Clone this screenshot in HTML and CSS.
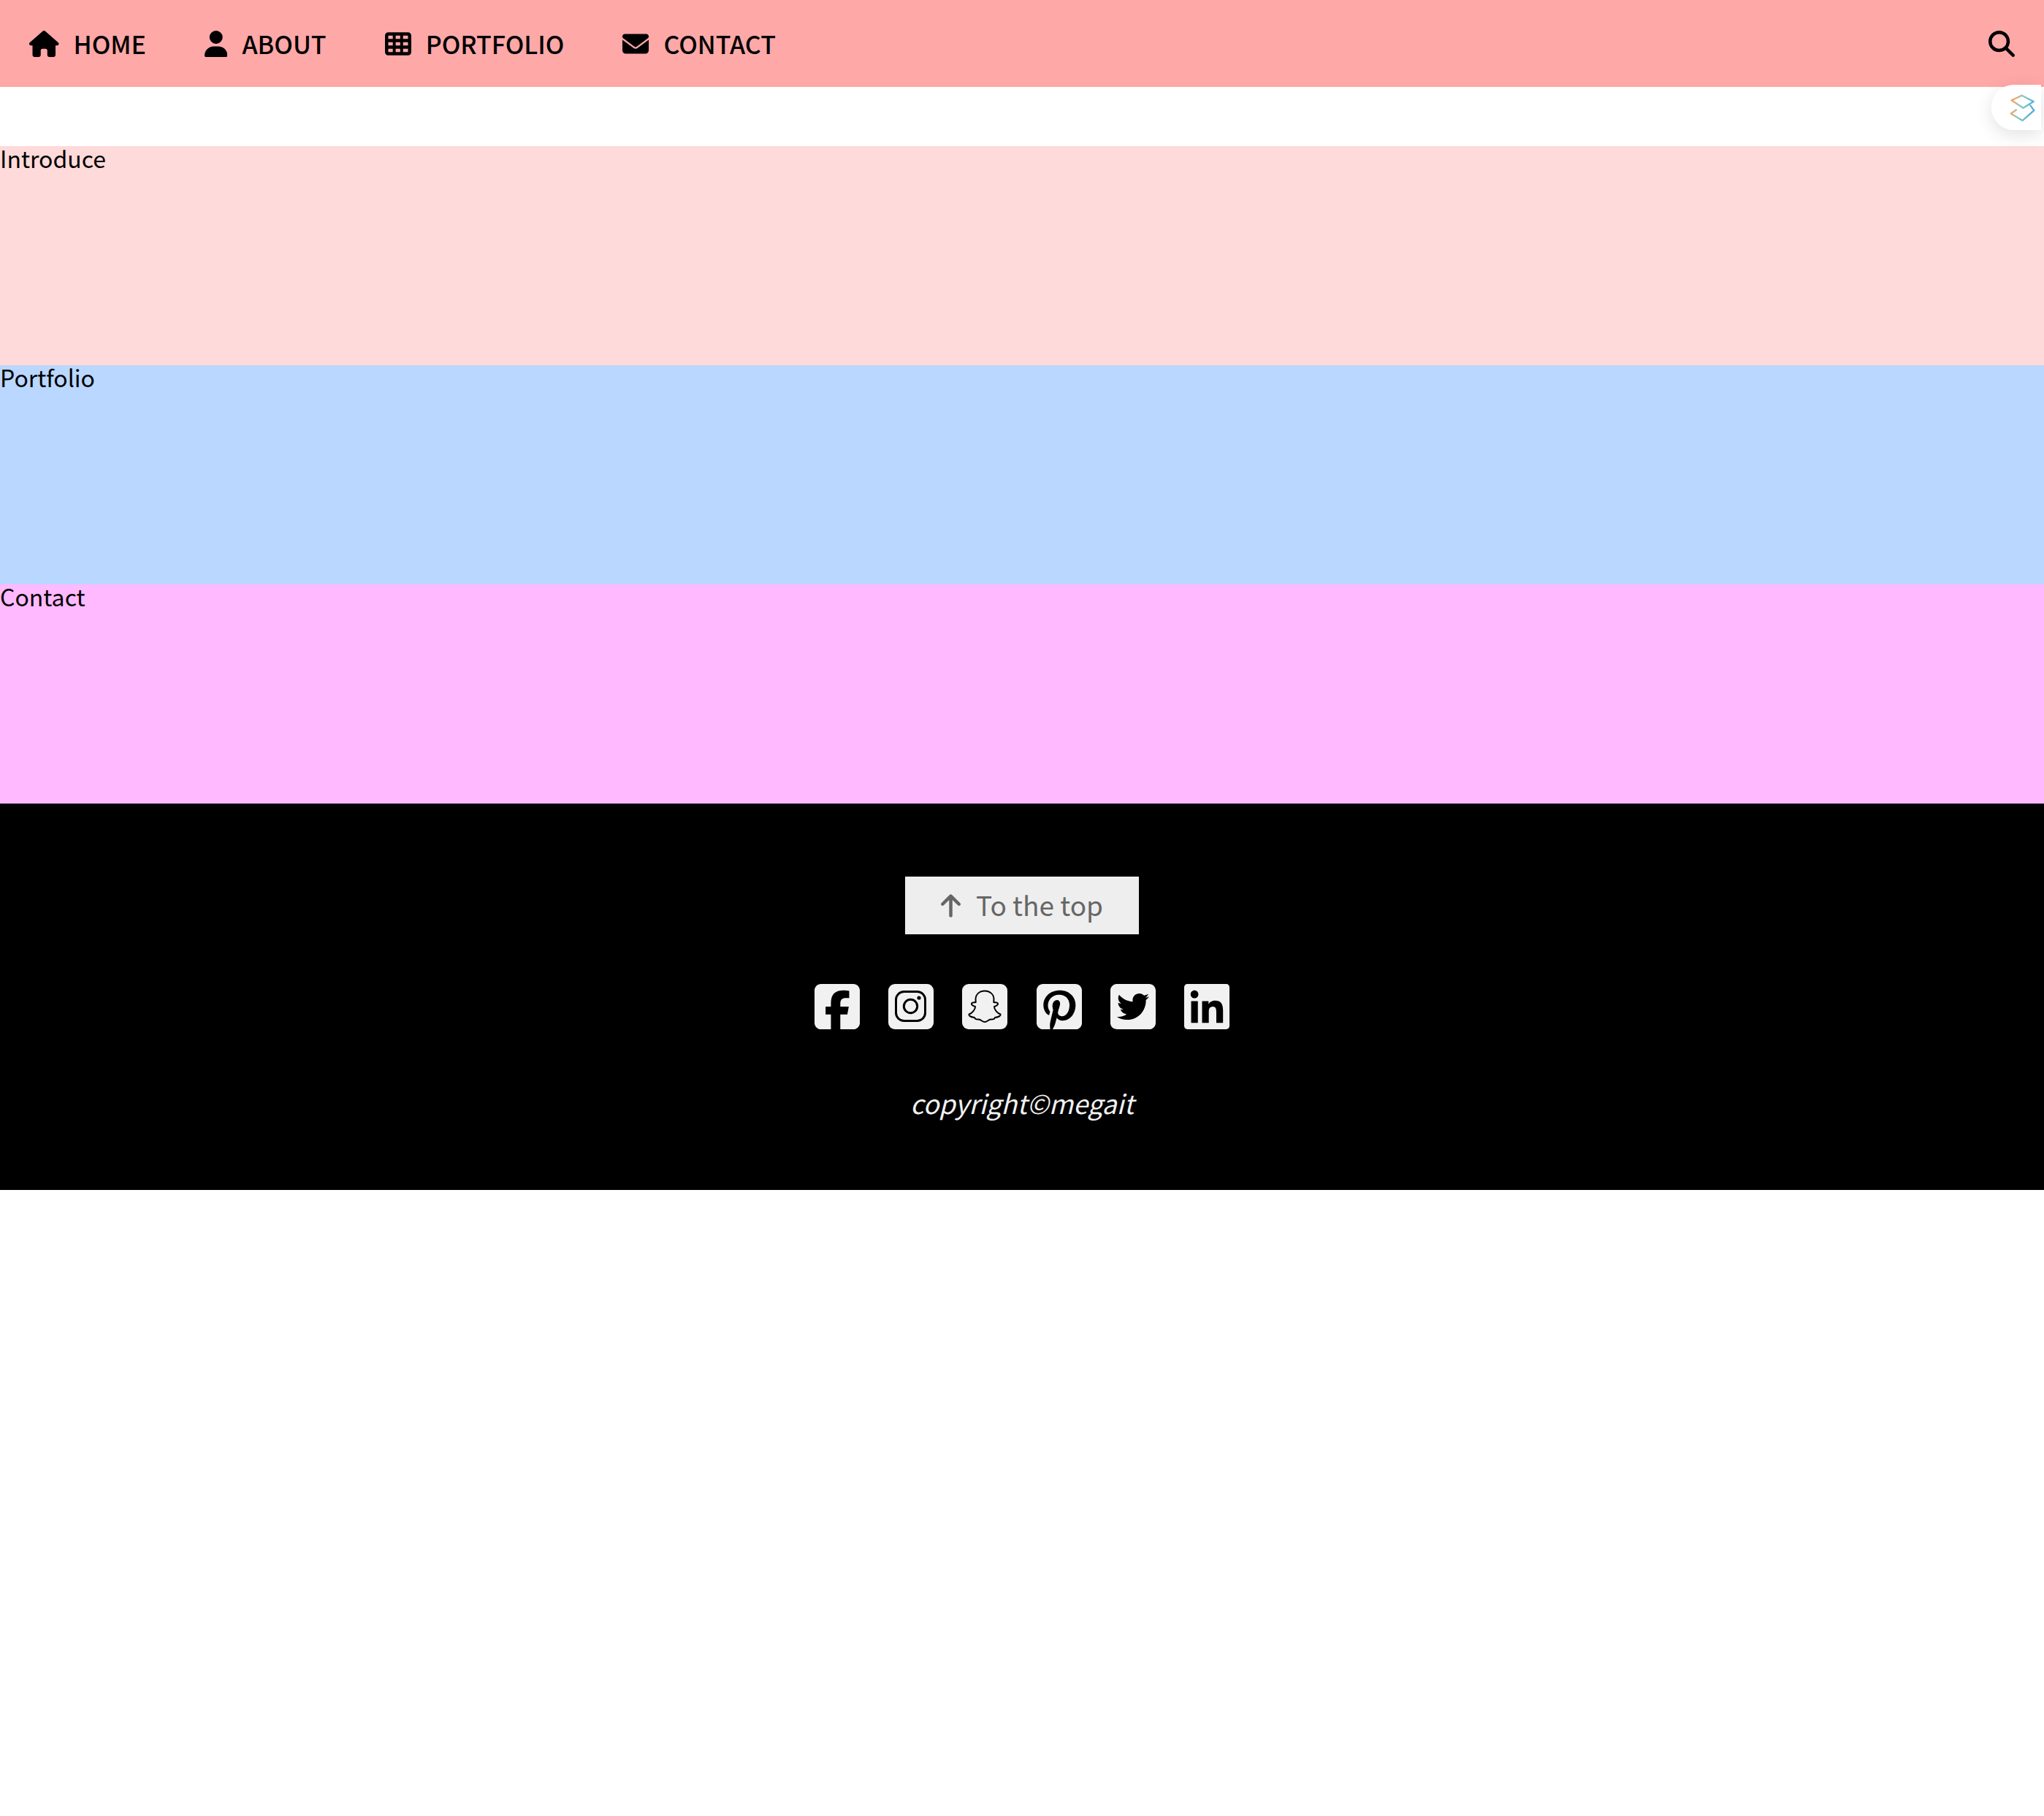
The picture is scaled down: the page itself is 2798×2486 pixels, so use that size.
FILE: index.html
```html
<!DOCTYPE html>
<html lang="en">
<head>
<meta charset="utf-8">
<title>Portfolio</title>
<link rel="stylesheet" href="styles.css">
</head>
<body>
<header class="nav">
  <nav class="nav-links">
    <a class="nav-link"><svg class="nav-icon" viewBox="0 0 576 512"><path d="M575.8 255.5c0 18-15 32.1-32 32.1h-32l.7 160.2c0 2.7-.2 5.4-.5 8.1V472c0 22.1-17.9 40-40 40H456c-1.1 0-2.2 0-3.3-.1c-1.4 .1-2.8 .1-4.2 .1H416 392c-22.1 0-40-17.9-40-40V448 384c0-17.7-14.3-32-32-32H256c-17.7 0-32 14.3-32 32v64 24c0 22.1-17.9 40-40 40H160 128.1c-1.5 0-3-.1-4.5-.2c-1.2 .1-2.4 .2-3.6 .2H104c-22.1 0-40-17.9-40-40V360c0-.9 0-1.9 .1-2.8V287.6H32c-18 0-32-14-32-32.1c0-9 3-17 10-24L266.4 8c7-7 15-8 22-8s15 2 21 7L564.8 231.5c8 7 12 15 11 24z"/></svg>HOME</a>
    <a class="nav-link"><svg class="nav-icon" viewBox="0 0 448 512"><path d="M224 256A128 128 0 1 0 224 0a128 128 0 1 0 0 256zm-45.7 48C79.8 304 0 383.8 0 482.3C0 498.7 13.3 512 29.7 512H418.3c16.4 0 29.7-13.3 29.7-29.7C448 383.8 368.2 304 269.7 304H178.3z"/></svg>ABOUT</a>
    <a class="nav-link"><svg class="nav-icon" viewBox="0 0 512 512"><path d="M64 32C28.7 32 0 60.7 0 96V416c0 35.3 28.7 64 64 64H448c35.3 0 64-28.7 64-64V96c0-35.3-28.7-64-64-64H64zm88 64v64H64V96h88zm56 0h88v64H208V96zm240 0v64H352V96h96zM64 224h88v64H64V224zm232 0v64H208V224h88zm56 0h96v64H352V224zM152 352v64H64V352h88zm56 0h88v64H208V352zm240 0v64H352V352h96z" fill-rule="evenodd"/></svg>PORTFOLIO</a>
    <a class="nav-link"><svg class="nav-icon" viewBox="0 0 512 512"><path d="M48 64C21.5 64 0 85.5 0 112c0 15.1 7.1 29.3 19.2 38.4L236.8 313.6c11.4 8.5 27 8.5 38.4 0L492.8 150.4c12.1-9.1 19.2-23.3 19.2-38.4c0-26.5-21.5-48-48-48H48zM0 176V384c0 35.3 28.7 64 64 64H448c35.3 0 64-28.7 64-64V176L294.4 339.2c-22.8 17.1-54 17.1-76.8 0L0 176z"/></svg>CONTACT</a>
  </nav>
  <svg class="search-icon" viewBox="0 0 512 512"><path d="M416 208c0 45.9-14.9 88.3-40 122.7L502.6 457.4c12.5 12.5 12.5 32.8 0 45.3s-32.8 12.5-45.3 0L330.7 376c-34.4 25.2-76.8 40-122.7 40C93.1 416 0 322.9 0 208S93.1 0 208 0S416 93.1 416 208zM208 352a144 144 0 1 0 0-288 144 144 0 1 0 0 288z"/></svg>
</header>
<aside class="widget">
  <svg class="widget-icon" viewBox="300 328 104 112">
    <defs><linearGradient id="layers" x1="0" y1="0" x2="1" y2="0.3"><stop offset="0" stop-color="#f29a58"/><stop offset="0.22" stop-color="#e6ad78"/><stop offset="0.55" stop-color="#7fcdc0"/><stop offset="1" stop-color="#55aedb"/></linearGradient></defs>
    <path d="M307 353 L350 333 L398 358 L355 385 Z M385 375 L400 395 L352 437 L304 408 L326 393" fill="none" stroke="url(#layers)" stroke-width="7" stroke-linejoin="round" stroke-linecap="round"/>
  </svg>
</aside>
<main class="sections">
  <section class="section section-intro">Introduce</section>
  <section class="section section-portfolio">Portfolio</section>
  <section class="section section-contact">Contact</section>
</main>
<footer class="footer">
  <a class="top-button"><svg class="top-icon" viewBox="0 0 384 512"><path d="M214.6 41.4c-12.5-12.5-32.8-12.5-45.3 0l-160 160c-12.5 12.5-12.5 32.8 0 45.3s32.8 12.5 45.3 0L160 141.2V448c0 17.7 14.3 32 32 32s32-14.3 32-32V141.2L329.4 246.6c12.5 12.5 32.8 12.5 45.3 0s12.5-32.8 0-45.3l-160-160z"/></svg>To the top</a>
  <div class="socials">
    <svg class="social" viewBox="0 32 448 448"><path d="M64 32C28.7 32 0 60.7 0 96V416c0 35.3 28.7 64 64 64h98.2V334.2H109.4V256h52.8V222.3c0-87.1 39.4-127.5 125-127.5c16.2 0 44.2 3.2 55.7 6.4V172c-6-.6-16.5-1-29.6-1c-42 0-58.2 15.9-58.2 57.2V256h83.6l-14.4 78.2H255V480H384c35.3 0 64-28.7 64-64V96c0-35.3-28.7-64-64-64H64z"/></svg>
    <svg class="social" viewBox="0 0 62 62"><rect width="62" height="62" rx="9"/><rect class="glyph" x="10.5" y="10.5" width="40" height="40" rx="11"/><circle class="glyph" cx="30.5" cy="30.5" r="9.2"/><circle class="glyph-dot" cx="42" cy="19" r="2.6"/></svg>
    <svg class="social" viewBox="0 0 62 62"><rect width="62" height="62" rx="9"/><path class="glyph-thin" d="M31 9.5C24 9.5 18.5 14 18.5 21L18.7 25C16.5 25.5 14 25 13 26.5C12.5 28.5 15 30 18 31C18 35 14 40 9.5 41.5C9 44 13 45.5 17 46C18 49 20 48.5 23 48.5C26 49 28 52 31 52C34 52 36 49 39 48.5C42 48.5 44 49 45 46C49 45.5 53 44 52.5 41.5C48 40 44 35 44 31C47 30 49.5 28.5 49 26.5C48 25 45.5 25.5 43.3 25L43.5 21C43.5 14 38 9.5 31 9.5Z"/></svg>
    <svg class="social" viewBox="0 32 448 448"><path d="M384 32H64C28.7 32 0 60.7 0 96V416c0 35.3 28.7 64 64 64h72.6l-2.2-.8c-5.4-48.1-3.1-57.5 15.7-134.7c3.9-16 8.5-35 13.9-57.9c0 0-7.3-14.8-7.3-36.5c0-70.7 75.5-78 75.5-25c0 13.5-5.4 31.1-11.2 49.8c-3.3 10.6-6.6 21.5-9.1 32c-5.7 24.5 12.3 44.4 36.4 44.4c43.7 0 77.2-46 77.2-112.4c0-58.8-42.3-99.9-102.6-99.9C153 139 112 191.4 112 245.6c0 21.1 8.2 43.7 18.3 56c2 2.4 2.3 4.5 1.7 7c-1.1 4.7-3.1 12.5-4.6 18.5c-1 3.7-1.7 6.7-2 8c-1 4.5-3.5 5.5-8.1 3.3c-30.6-14.3-49.8-59.1-49.8-95.1C68.1 166.1 125.1 96 232.3 96c86.2 0 153.2 61.4 153.2 143.6c0 85.7-54.1 154.7-129.1 154.7c-25.3 0-49-13.1-57.1-28.7c0 0-12.5 47.6-15.6 59.2c-5 19.1-17.9 42.9-27.4 58.6H384c35.3 0 64-28.7 64-64V96c0-35.3-28.7-64-64-64z"/></svg>
    <svg class="social" viewBox="0 32 448 448"><path d="M64 32C28.7 32 0 60.7 0 96V416c0 35.3 28.7 64 64 64H384c35.3 0 64-28.7 64-64V96c0-35.3-28.7-64-64-64H64zM351.3 199.3v0c0 86.7-66 186.6-186.6 186.6c-37.2 0-71.7-10.8-100.7-29.4c5.3 .6 10.4 .8 15.8 .8c30.7 0 58.9-10.4 81.4-28c-28.8-.6-53-19.5-61.3-45.5c10.1 1.5 19.2 1.5 29.6-1.2c-30-6.1-52.5-32.5-52.5-64.4v-.8c8.7 4.9 18.9 7.9 29.6 8.3c-9-6-16.4-14.1-21.5-23.6s-7.8-20.2-7.7-31c0-12.2 3.2-23.4 8.9-33.1c32.3 39.8 80.8 65.8 135.2 68.6c-9.3-44.5 24-80.6 64-80.6c18.9 0 35.9 7.9 47.9 20.7c14.8-2.8 29-8.3 41.6-15.8c-4.9 15.2-15.1 28-28.6 36c13.1-1.4 25.9-5 37.6-10.1c-8.8 13-19.9 24.5-32.6 33.8c.2 2.8 .2 5.7 .2 8.5z" fill-rule="evenodd"/></svg>
    <svg class="social" viewBox="0 32 448 448"><path d="M416 32H31.9C14.3 32 0 46.5 0 64.3v383.4C0 465.5 14.3 480 31.9 480H416c17.6 0 32-14.5 32-32.3V64.3c0-17.8-14.4-32.3-32-32.3zM135.4 416H69V202.2h66.5V416zm-33.2-243c-21.3 0-38.5-17.3-38.5-38.5S80.9 96 102.2 96c21.2 0 38.5 17.3 38.5 38.5 0 21.3-17.2 38.5-38.5 38.5zm282.1 243h-66.4V312c0-24.8-.5-56.7-34.5-56.7-34.6 0-39.9 27-39.9 54.9V416h-66.4V202.2h63.7v29.2h.9c8.9-16.8 30.6-34.5 62.9-34.5 67.2 0 79.7 44.3 79.7 101.9V416z"/></svg>
  </div>
  <p class="copyright">copyright©megait</p>
</footer>
</body>
</html>
```
FILE: styles.css
```css
* { box-sizing: border-box; }
html, body { margin: 0; padding: 0; }
body {
  font-family: "Noto Sans CJK KR", "Noto Sans", sans-serif;
  font-size: 32px;
  line-height: 1.5;
  color: #000;
  background: #fff;
  position: relative;
}
.nav {
  height: 119px;
  background: #ffa8a8;
  display: flex;
  align-items: center;
  justify-content: space-between;
  padding: 0 40px;
}
.nav-links { display: flex; align-items: center; gap: 80px; }
.nav-link { display: flex; align-items: center; gap: 20px; font-size: 34px; font-weight: 500; }
.nav-icon { height: 36px; width: auto; display: block; }
.search-icon { width: 36px; height: 36px; display: block; }
.widget {
  position: absolute;
  top: 116px;
  right: 4px;
  width: 68px;
  height: 62px;
  padding-left: 25px;
  display: flex;
  align-items: center;
  background: rgba(255, 255, 255, 0.92);
  border-radius: 31px 0 0 31px;
  box-shadow: 0 6px 24px rgba(0, 0, 0, 0.12);
}
.widget-icon { width: 35px; height: 37px; display: block; }
.sections { margin-top: 81px; }
.section { height: 300px; line-height: 33px; }
.section-intro { background: #ffdada; }
.section-portfolio { background: #b9d7ff; }
.section-contact { background: #ffb9ff; }
.footer {
  height: 529px;
  background: #000;
  padding-top: 100px;
  display: flex;
  flex-direction: column;
  align-items: center;
}
.top-button {
  width: 320px;
  height: 79px;
  padding-bottom: 2px;
  background: #eee;
  color: #666;
  font-size: 37px;
  display: flex;
  align-items: center;
  justify-content: center;
  gap: 21px;
}
.top-icon { width: 27px; height: 36px; margin-top: 2px; fill: #666; display: block; }
.socials { display: flex; gap: 39.3px; margin-top: 68px; }
.social { width: 62px; height: 62px; fill: #f1f1f1; display: block; }
.glyph { fill: none; stroke: #000; stroke-width: 3; }
.glyph-thin { fill: none; stroke: #000; stroke-width: 2; stroke-linejoin: round; }
.glyph-dot { fill: #000; }
.copyright {
  margin: 76px 0 0;
  color: #f1f1f1;
  font-size: 36px;
  line-height: 48px;
  font-style: italic;
}
```
